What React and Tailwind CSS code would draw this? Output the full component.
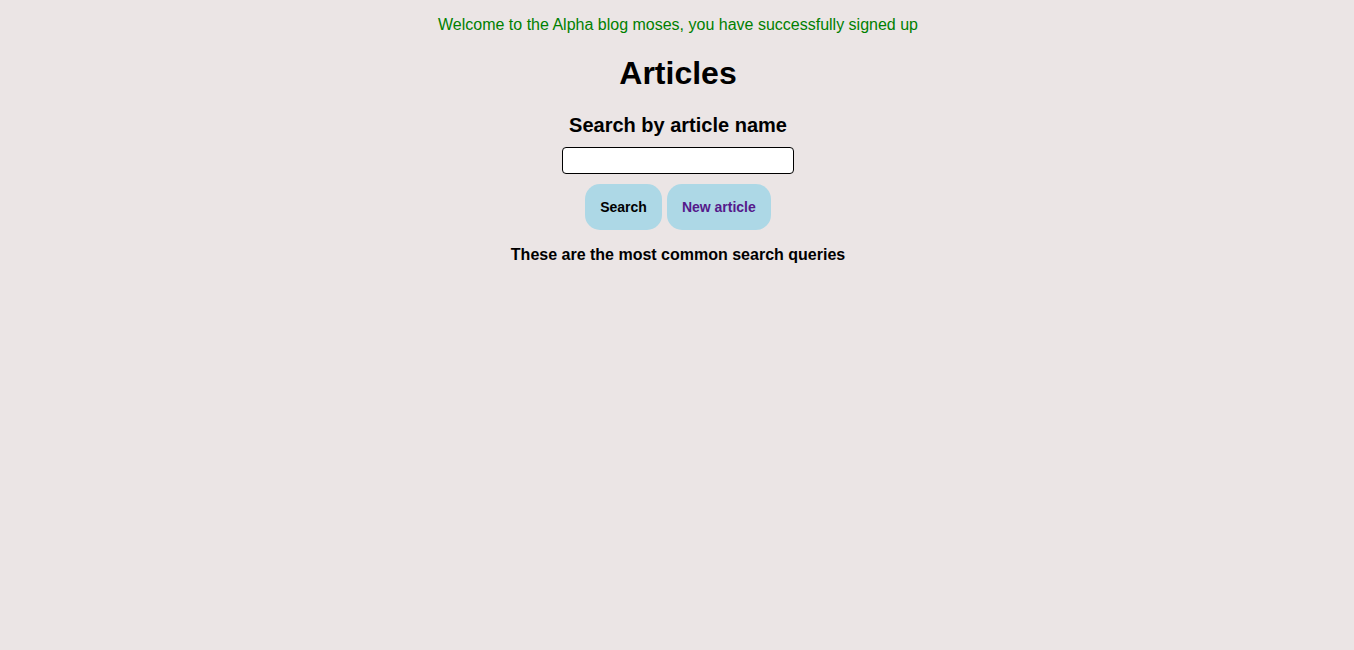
export default function App() {
  return (
    <div className="min-h-[650px] w-full bg-[#ebe5e5] flex flex-col items-center pl-[2px] text-black" style={{ fontFamily: '"Liberation Sans", Arial, sans-serif' }}>
      <p className="mt-[16px] text-[16px] leading-[18px] text-[#008000]">
        Welcome to the Alpha blog moses, you have successfully signed up
      </p>
      <h1 className="mt-[21px] text-[32px] leading-[37px] font-bold">Articles</h1>
      <h3 className="mt-[22px] text-[20px] leading-[23px] font-bold">Search by article name</h3>
      <input type="text" className="mt-[10px] w-[232px] h-[27px] bg-white border border-black rounded-[4px] outline-none px-1" />
      <div className="mt-[10px] flex gap-[5px]">
        <button className="h-[46px] px-[15px] rounded-[15px] bg-[#add8e6] text-[14px] font-bold text-black">Search</button>
        <a href="#" className="h-[46px] px-[15px] rounded-[15px] bg-[#add8e6] text-[14px] font-bold text-[#551a8b] flex items-center">New article</a>
      </div>
      <p className="mt-[16px] text-[16px] leading-[18px] font-bold">These are the most common search queries</p>
    </div>
  );
}
